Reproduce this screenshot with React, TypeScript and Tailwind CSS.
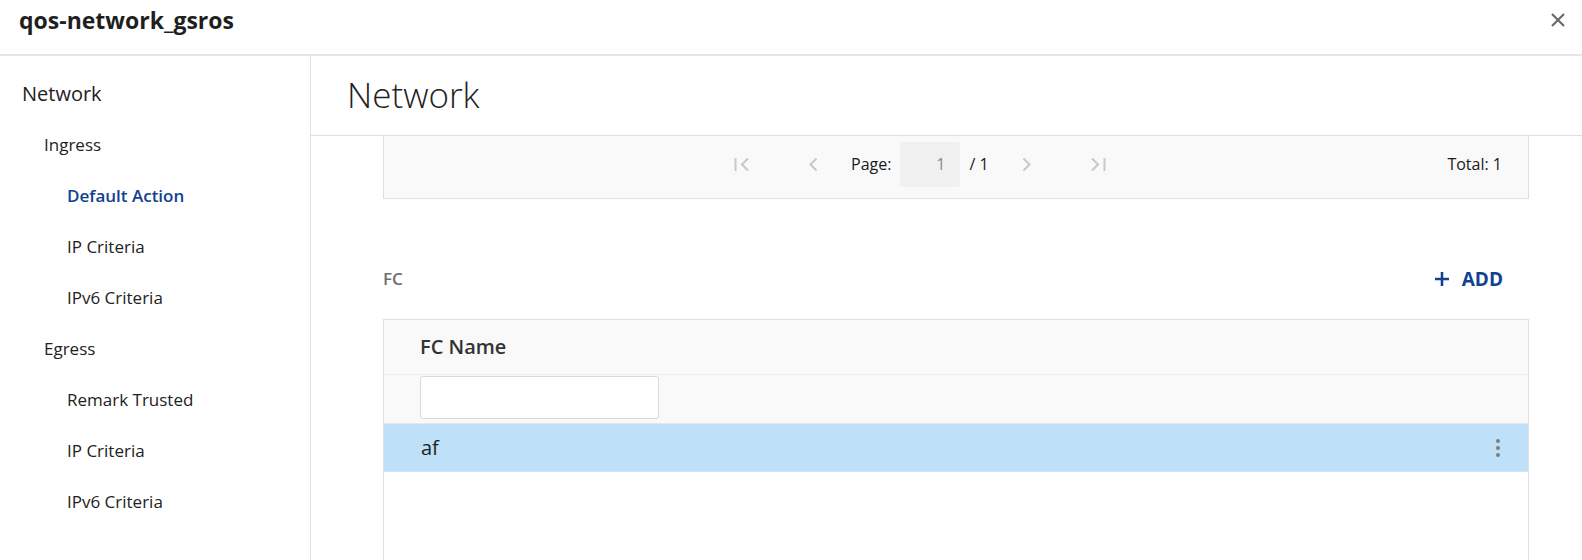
import React from 'react';

// Sidebar tree entries
const navItems: { label: string; level: 0 | 1 | 2; active?: boolean }[] = [
  { label: 'Network', level: 0 },
  { label: 'Ingress', level: 1 },
  { label: 'Default Action', level: 2, active: true },
  { label: 'IP Criteria', level: 2 },
  { label: 'IPv6 Criteria', level: 2 },
  { label: 'Egress', level: 1 },
  { label: 'Remark Trusted', level: 2 },
  { label: 'IP Criteria', level: 2 },
  { label: 'IPv6 Criteria', level: 2 },
];

const levelClasses = {
  0: 'pl-[22px] text-[20px]',
  1: 'pl-[44px] text-[17px]',
  2: 'pl-[67px] text-[17px]',
};

const FirstIcon = () => (
  <svg width="16" height="15" viewBox="0 0 16 15" fill="none" stroke="#c8c8c8" strokeWidth="2">
    <path d="M1.5 1v13" />
    <path d="M14 1.5L8 7.5l6 6" />
  </svg>
);

const PrevIcon = () => (
  <svg width="10" height="15" viewBox="0 0 10 15" fill="none" stroke="#c8c8c8" strokeWidth="2">
    <path d="M8.5 1.5L2.5 7.5l6 6" />
  </svg>
);

const NextIcon = () => (
  <svg width="10" height="15" viewBox="0 0 10 15" fill="none" stroke="#c8c8c8" strokeWidth="2">
    <path d="M1.5 1.5l6 6-6 6" />
  </svg>
);

const LastIcon = () => (
  <svg width="16" height="15" viewBox="0 0 16 15" fill="none" stroke="#c8c8c8" strokeWidth="2">
    <path d="M2 1.5l6 6-6 6" />
    <path d="M14.5 1v13" />
  </svg>
);

const CloseIcon = () => (
  <svg width="14" height="14" viewBox="0 0 14 14" fill="none" stroke="#6b6b6b" strokeWidth="2.2">
    <path d="M1 1l12 12M13 1L1 13" />
  </svg>
);

const PlusIcon = () => (
  <svg width="16" height="16" viewBox="0 0 16 16" fill="none" stroke="#124191" strokeWidth="2.6">
    <path d="M8 1v14M1 8h14" />
  </svg>
);

const Pagination = () => (
  <div className="h-[63px] border-x border-b border-[#e0e0e0] bg-[#f9f9f9]">
    <div className="flex h-full items-center pb-[6px] pl-[350px] pr-[26px] text-[16px] text-[#1a1a1a]">
      <FirstIcon />
      <div className="ml-[58px]">
        <PrevIcon />
      </div>
      <span className="ml-[33px]">Page:</span>
      <div className="ml-[9px] flex h-[45px] w-[60px] items-center justify-end rounded-[3px] bg-[#f0f0f0] pr-[15px] text-[#8a8a8a]">
        1
      </div>
      <span className="ml-[9px]">/ 1</span>
      <div className="ml-[33px]">
        <NextIcon />
      </div>
      <div className="ml-[58px]">
        <LastIcon />
      </div>
      <span className="ml-auto">Total: 1</span>
    </div>
  </div>
);

const FcTable = () => (
  <div className="h-[260px] border-x border-t border-[#e0e0e0]">
    <div className="flex h-[55px] items-center border-b border-[#ededed] bg-[#f9f9f9] pl-[36px] text-[20px] font-semibold text-[#333]">
      FC Name
    </div>
    <div className="flex h-[49px] items-start border-b border-[#e6e6e6] bg-[#f9f9f9] pl-[36px] pt-[1px]">
      <div className="h-[43px] w-[239px] rounded-[3px] border border-[#d9d9d9] bg-white" />
    </div>
    <div className="flex h-[48px] items-center justify-between border-b border-[#d5e3ee] bg-[#bee1f9] pl-[37px] pr-[28px]">
      <span className="text-[20px] text-[#222]">af</span>
      <div className="flex flex-col gap-[3px]">
        <span className="h-[4px] w-[4px] rounded-full bg-[#7d7d7d]" />
        <span className="h-[4px] w-[4px] rounded-full bg-[#7d7d7d]" />
        <span className="h-[4px] w-[4px] rounded-full bg-[#7d7d7d]" />
      </div>
    </div>
  </div>
);

export default function App() {
  return (
    <div className="flex h-[560px] w-full flex-col overflow-hidden bg-white font-['Open_Sans',sans-serif] text-[#222]">
      <header className="flex h-[56px] shrink-0 items-start justify-between border-b-2 border-[#e6e6e6] pl-[19px] pr-[17px] pt-[5px]">
        <h1 className="text-[23px] font-bold leading-[30px] text-[#1f1f1f]">qos-network_gsros</h1>
        <button className="flex h-[30px] items-center">
          <CloseIcon />
        </button>
      </header>

      <div className="flex min-h-0 flex-1">
        <nav className="w-[311px] shrink-0 border-r border-[#e0e0e0] pt-[12px]">
          {navItems.map((item, i) => (
            <div
              key={i}
              className={`flex h-[51px] items-center ${levelClasses[item.level]} ${
                item.active ? 'font-semibold text-[#124191]' : 'text-[#222]'
              }`}
            >
              {item.label}
            </div>
          ))}
        </nav>

        <main className="flex min-w-0 flex-1 flex-col">
          <div className="flex h-[80px] shrink-0 items-center border-b border-[#e0e0e0] pl-[36px] text-[35px] font-light text-[#222]">
            Network
          </div>
          <div className="min-h-0 flex-1 overflow-hidden pl-[72px] pr-[53px]">
            <Pagination />

            <div className="mt-[60px] flex h-[40px] items-center justify-between pr-[26px]">
              <span className="text-[17px] font-semibold text-[#6e6e6e]">FC</span>
              <button className="flex items-center gap-[12px] text-[19px] font-bold text-[#124191]">
                <PlusIcon />
                ADD
              </button>
            </div>

            <div className="mt-[20px]">
              <FcTable />
            </div>
          </div>
        </main>
      </div>
    </div>
  );
}
